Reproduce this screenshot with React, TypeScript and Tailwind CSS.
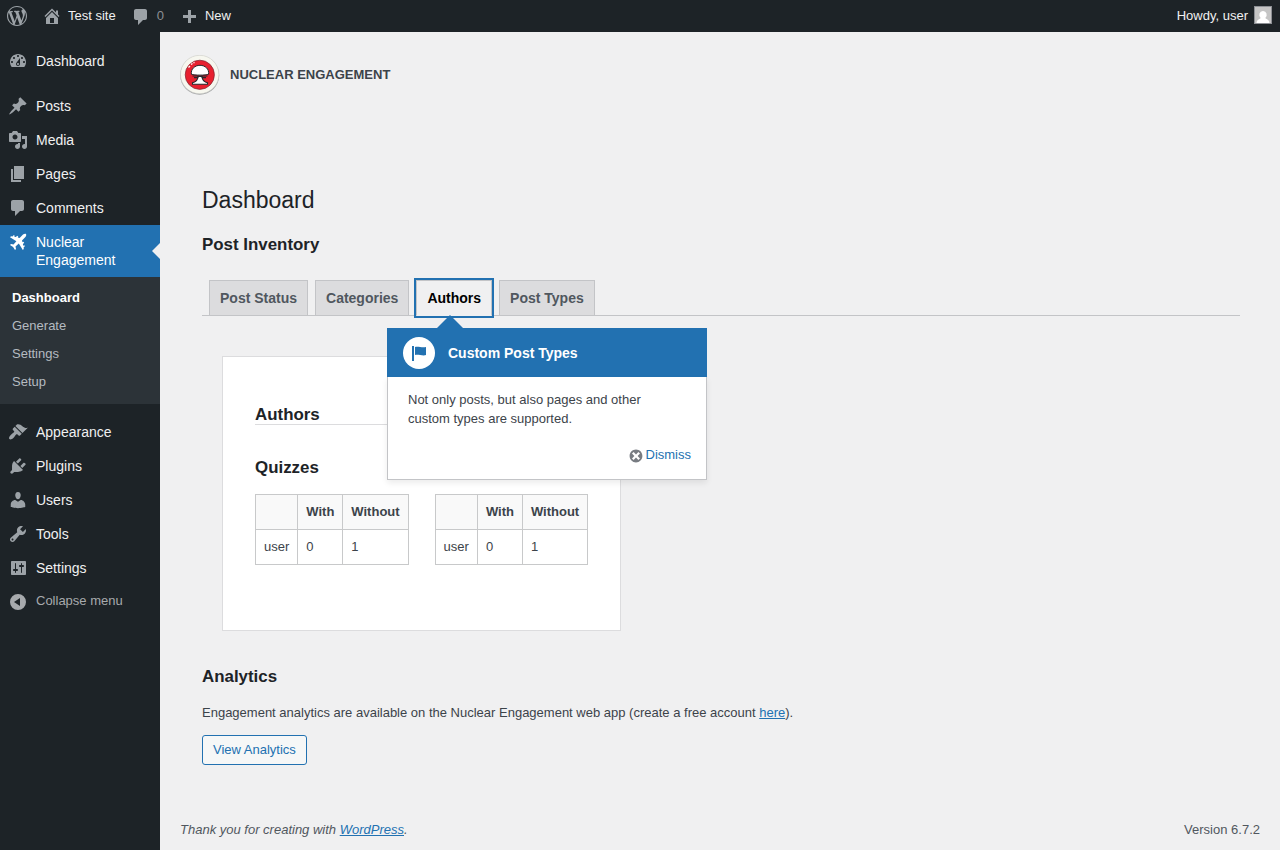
import React from 'react';

const ICONS: Record<string, string> = {
  wordpress:
    'M20 10c0-5.51-4.49-10-10-10C4.48 0 0 4.49 0 10c0 5.52 4.48 10 10 10 5.51 0 10-4.48 10-10zM7.78 15.37L4.37 6.22c.55-.02 1.17-.08 1.17-.08.5-.06.44-1.13-.06-1.11 0 0-1.45.11-2.37.11-.18 0-.37 0-.58-.01C4.12 2.69 6.87 1.11 10 1.11c2.33 0 4.45.87 6.05 2.34-.68-.11-1.65.39-1.65 1.58 0 .74.45 1.36.9 2.1.35.61.55 1.36.55 2.46 0 1.49-1.4 5-1.4 5l-3.03-8.37c.54-.02.82-.17.82-.17.5-.05.44-1.25-.06-1.22 0 0-1.44.12-2.38.12-.87 0-2.33-.12-2.33-.12-.5-.03-.56 1.2-.06 1.22l.92.08 1.26 3.41zM17.41 10c.24-.64.74-1.87.43-4.25.7 1.29 1.05 2.71 1.05 4.25 0 3.29-1.73 6.24-4.4 7.78.97-2.59 1.94-5.2 2.92-7.78zM6.1 18.09C3.12 16.65 1.11 13.53 1.11 10c0-1.3.23-2.48.72-3.59C3.25 10.3 4.67 14.2 6.1 18.09zm4.03-6.63l2.58 6.98c-.86.29-1.76.45-2.71.45-.79 0-1.57-.11-2.29-.33.81-2.38 1.62-4.74 2.42-7.1z',
  home: 'M16 8.5l1.53 1.53-1.06 1.06L10 4.6l-6.47 6.49-1.06-1.06L10 2.5l4 4v-2h2v4zm-6-2.46l6 5.99V18H4v-5.97zM12 17v-5H8v5h4z',
  comments: 'M5 2h9c1.1 0 2 .9 2 2v7c0 1.1-.9 2-2 2h-2l-5 5v-5H5c-1.1 0-2-.9-2-2V4c0-1.1.9-2 2-2z',
  plus: 'M17 7v3h-5v5H9v-5H4V7h5V2h3v5h5z',
  dashboard:
    'M3.76 16h12.48c1.1-1.37 1.76-3.11 1.76-5 0-4.42-3.58-8-8-8s-8 3.58-8 8c0 1.89.66 3.63 1.76 5zM10 4c.55 0 1 .45 1 1s-.45 1-1 1-1-.45-1-1 .45-1 1-1zM6 6c.55 0 1 .45 1 1s-.45 1-1 1-1-.45-1-1 .45-1 1-1zm8 0c.55 0 1 .45 1 1s-.45 1-1 1-1-.45-1-1 .45-1 1-1zm-5.37 5.55L12 7v6c0 1.1-.9 2-2 2s-2-.9-2-2c0-.57.24-1.08.63-1.45zM4 10c.55 0 1 .45 1 1s-.45 1-1 1-1-.45-1-1 .45-1 1-1zm12 0c.55 0 1 .45 1 1s-.45 1-1 1-1-.45-1-1 .45-1 1-1zm-5 3c0-.55-.45-1-1-1s-1 .45-1 1 .45 1 1 1 1-.45 1-1z',
  post: 'M10.44 3.02l1.82-1.82 6.36 6.35-1.83 1.82c-1.05-.68-2.48-.57-3.41.36l-.75.75c-.92.93-1.04 2.35-.35 3.41l-1.83 1.82-2.41-2.41-2.8 2.79c-.42.42-3.38 2.71-3.8 2.29s1.86-3.39 2.28-3.81l2.79-2.79L4.1 9.36l1.83-1.82c1.05.69 2.48.57 3.4-.36l.75-.75c.93-.92 1.05-2.35.36-3.41z',
  media:
    'M13 11V4c0-.55-.45-1-1-1h-1.67L9 1H5L3.67 3H2c-.55 0-1 .45-1 1v7c0 .55.45 1 1 1h10c.55 0 1-.45 1-1zM7 4.5c1.38 0 2.5 1.12 2.5 2.5S8.38 9.5 7 9.5 4.5 8.38 4.5 7 5.62 4.5 7 4.5zM14 6h5v10.5c0 1.38-1.12 2.5-2.5 2.5S14 17.88 14 16.5s1.12-2.5 2.5-2.5c.17 0 .34.02.5.05V9h-3V6zm-4 8.05V13h2v3.5c0 1.38-1.12 2.5-2.5 2.5S7 17.88 7 16.5 8.12 14 9.5 14c.17 0 .34.02.5.05z',
  page: 'M6 15V2h10v13H6zm-1 1h8v2H3V5h2v11z',
  airplane:
    'M18 2c.5.7.2 2.1-.6 3L14 8.4l.5 1.9.7-.6 1 .9-1.3 1.7.3 1.5.9-.6.9.9-1.4 1.5.2 1.4-1 1L10.8 11.6 7.5 14.5 8 17l-1 1-1.9-3L2 13l1-1 2.5.5L8.4 9.2 2 5.2l1-1 1.4.2 1.5-1.4.9.9-.6.9 1.5.3 1.7-1.3.9 1-.6.7 1.9.5L15 2.6c.9-.8 2.3-1.1 3-.6z',
  appearance:
    'M14.48 11.06L7.41 3.99l1.5-1.5c.5-.56 2.3-.47 3.51.32 1.21.8 1.43 1.28 2.91 2.1 1.18.64 2.45 1.26 4.45.85zm-.71.71L6.7 4.7 4.93 6.47c-.39.39-.39 1.02 0 1.41l1.06 1.06c.39.39.39 1.03 0 1.42-.6.6-1.43 1.11-2.21 1.69-.35.26-.7.53-1.01.84C1.43 14.23.4 16.08 1.4 17.07c.99 1 2.84-.03 4.18-1.36.31-.31.58-.66.85-1.02.57-.78 1.08-1.61 1.69-2.21.39-.39 1.02-.39 1.41 0l1.06 1.06c.39.39 1.02.39 1.41 0z',
  plugins:
    'M13.11 4.36L9.87 7.6 8 5.73l3.24-3.24c.35-.34 1.05-.2 1.56.32.52.51.66 1.21.31 1.55zm-8 1.77l.91-1.12 9.01 9.01-1.19.84c-.71.71-2.63 1.16-3.82 1.16H6.14L4.9 17.26c-.59.59-1.54.59-2.12 0-.59-.58-.59-1.53 0-2.12l1.24-1.24v-3.88c0-1.13.4-3.19 1.09-3.89zm7.26 3.97l3.24-3.24c.34-.35 1.04-.21 1.55.31.52.51.66 1.21.31 1.55l-3.24 3.25z',
  users:
    'M10 9.25c-2.27 0-2.73-3.44-2.73-3.44C7 4.02 7.82 2 9.97 2c2.16 0 2.98 2.02 2.71 3.81 0 0-.41 3.44-2.68 3.44zm0 2.57L12.72 10c2.39 0 4.52 2.33 4.52 4.53v2.49s-3.65 1.13-7.24 1.13c-3.65 0-7.24-1.13-7.24-1.13v-2.49c0-2.25 1.94-4.48 4.47-4.48z',
  tools:
    'M16.68 9.77c-1.34 1.34-3.3 1.67-4.95.99l-5.41 6.52c-.99.99-2.59.99-3.58 0s-.99-2.59 0-3.57l6.52-5.42c-.68-1.65-.35-3.61.99-4.95 1.28-1.28 3.12-1.62 4.72-1.06l-2.89 2.89 2.82 2.82 2.86-2.87c.53 1.58.18 3.39-1.08 4.65zM3.81 16.21c.4.39 1.04.39 1.43 0 .4-.4.4-1.04 0-1.43-.39-.4-1.03-.4-1.43 0-.39.39-.39 1.03 0 1.43z',
  settings:
    'M18 16V4c0-.55-.45-1-1-1H4c-.55 0-1 .45-1 1v12c0 .55.45 1 1 1h13c.55 0 1-.45 1-1zM8 11h1c.55 0 1 .45 1 1s-.45 1-1 1H8v1.5c0 .28-.22.5-.5.5s-.5-.22-.5-.5V13H6c-.55 0-1-.45-1-1s.45-1 1-1h1V5.5c0-.28.22-.5.5-.5s.5.22.5.5V11zm5-2h-1c-.55 0-1-.45-1-1s.45-1 1-1h1V5.5c0-.28.22-.5.5-.5s.5.22.5.5V7h1c.55 0 1 .45 1 1s-.45 1-1 1h-1v5.5c0 .28-.22.5-.5.5s-.5-.22-.5-.5V9z',
  collapse: 'M10 2a8 8 0 1 0 0 16 8 8 0 0 0 0-16zm2 4.1v7.8L6 10z',
  flag: 'M5 18V3H3v15h2zm1-6V4c3-1 7 1 11 0v8c-3 1.27-8-1-11 0z',
  dismiss:
    'M10 2c4.42 0 8 3.58 8 8s-3.58 8-8 8-8-3.58-8-8 3.58-8 8-8zm5 11l-3-3 3-3-2-2-3 3-3-3-2 2 3 3-3 3 2 2 3-3 3 3z',
};

const Icon = ({ name, className = 'size-5 text-[#9ca2a7]' }: { name: string; className?: string }) => (
  <svg viewBox="0 0 20 20" fill="currentColor" fillRule="evenodd" className={`shrink-0 ${className}`}>
    <path d={ICONS[name]} />
  </svg>
);

const AdminBar = () => (
  <header className="flex h-8 items-start justify-between bg-[#1d2327] pr-2 text-[13px] leading-8 text-[#f0f0f1]">
    <div className="flex">
      <Icon name="wordpress" className="mt-1.5 ml-[7px] size-5 text-[#9ca2a7]" />
      <Icon name="home" className="mt-1.5 mr-1.5 ml-[15px] size-5 text-[#9ca2a7]" />
      <span>Test site</span>
      <Icon name="comments" className="mt-[7px] mr-1.5 ml-[15px] size-5 text-[#9ca2a7]" />
      <span className="text-[#8c8f94]">0</span>
      <Icon name="plus" className="mt-2 mr-1.5 ml-[15px] size-5 text-[#9ca2a7]" />
      <span>New</span>
    </div>
    <div className="flex">
      <span>Howdy, user</span>
      <svg viewBox="0 0 18 18" className="mt-1.5 ml-1.5 size-[18px]">
        <path d="M0 0h18v18H0z" fill="#8c8f94" />
        <path d="M1 1h16v16H1z" fill="#c5c5c5" />
        <path d="M9 5a3.6 3.9 0 0 1 2.3 7c.3 1 4 1 4.2 5h-13c.2-4 3.9-4 4.2-5A3.6 3.9 0 0 1 9 5z" fill="#fff" />
      </svg>
    </div>
  </header>
);

const MenuItem = ({ icon, label }: { icon: string; label: string }) => (
  <li className="flex h-[34px] pt-[7px] pl-2">
    <Icon name={icon} />
    <span className="mt-px ml-2 text-sm leading-[18px] text-[#f0f0f1]">{label}</span>
  </li>
);

const contentItems = [
  { icon: 'post', label: 'Posts' },
  { icon: 'media', label: 'Media' },
  { icon: 'page', label: 'Pages' },
  { icon: 'comments', label: 'Comments' },
];

const adminItems = [
  { icon: 'appearance', label: 'Appearance' },
  { icon: 'plugins', label: 'Plugins' },
  { icon: 'users', label: 'Users' },
  { icon: 'tools', label: 'Tools' },
  { icon: 'settings', label: 'Settings' },
];

const Sidebar = () => (
  <nav className="w-40 shrink-0 bg-[#1d2327] pt-3">
    <ul>
      <MenuItem icon="dashboard" label="Dashboard" />
    </ul>
    <ul className="mt-[11px]">
      {contentItems.map((item) => (
        <MenuItem key={item.label} {...item} />
      ))}
    </ul>
    <div className="relative flex h-[52px] bg-[#2271b1] pt-[7px] pl-2 text-white">
      <Icon name="airplane" className="size-5 text-white" />
      <span className="mt-px ml-2 text-sm leading-[18px]">
        Nuclear
        <br />
        Engagement
      </span>
      <span className="absolute top-[18px] right-0 border-8 border-l-0 border-transparent border-r-[#f0f0f1]" />
    </div>
    <ul className="bg-[#2c3338] pt-[7px] pb-2 pl-3 text-[13px] leading-7 text-[#b5bbc1]">
      <li className="font-semibold text-white">Dashboard</li>
      <li>Generate</li>
      <li>Settings</li>
      <li>Setup</li>
    </ul>
    <ul className="mt-[11px]">
      {adminItems.map((item) => (
        <MenuItem key={item.label} {...item} />
      ))}
    </ul>
    <div className="flex pt-[7px] pl-2 text-[13px] leading-[18px] text-[#a7aaad]">
      <Icon name="collapse" className="size-5 text-[#a7aaad]" />
      <span className="ml-2">Collapse menu</span>
    </div>
  </nav>
);

const Logo = () => (
  <svg viewBox="0 0 40 40" className="size-10">
    <circle cx="19.7" cy="20.3" r="19.5" fill="#a3a5a7" />
    <circle cx="19.7" cy="19.5" r="19.2" fill="#f7f7ef" stroke="#cfcfca" strokeWidth="0.6" />
    <circle cx="19.8" cy="19.8" r="14.6" fill="#e8212f" stroke="#7a2530" strokeWidth="0.7" />
    <path d="M17.8 21.5h4.4c0 3.5 1.3 5.3 5.3 6.3v1.4h-15v-1.4c4-1 5.3-2.8 5.3-6.3z" fill="#fff" stroke="#24282c" strokeWidth="1.1" />
    <path d="M12.5 21h15M14 22.600h12" stroke="#24282c" strokeWidth="1.1" />
    <path d="M11.4 19.3c-.8-5.3 3.5-9 8.6-9s9.4 3.7 8.6 9c-3 1.1-14.2 1.1-17.2 0z" fill="#fff" stroke="#24282c" strokeWidth="1" />
    <path d="M18.6 22h2.8v4h-2.8z" fill="#fff" />
    <path d="M8.5 12.5l1.5-1.5M11 9.5l1.5-1M13.5 7.8l1-.5" stroke="#fff" strokeWidth="1.3" />
  </svg>
);

const TAB = 'border border-b-0 border-[#c3c4c7] bg-[#dcdcde] px-2.5 py-[5px] text-[#50575e]';

const Tabs = () => (
  <div className="mt-5 flex gap-[7px] border-b border-[#c3c4c7] pl-[7px] text-sm leading-6 font-semibold">
    <a className={TAB}>Post Status</a>
    <a className={TAB}>Categories</a>
    <a className="-mb-px border border-[#c3c4c7] border-b-[#f0f0f1] bg-[#f0f0f1] px-2.5 py-[5px] text-black ring-2 ring-[#2271b1]">
      Authors
    </a>
    <a className={TAB}>Post Types</a>
  </div>
);

const CountTable = () => (
  <table className="border-collapse text-left">
    <thead>
      <tr className="bg-[#f9f9f9]">
        {['', 'With', 'Without'].map((h) => (
          <th key={h} className="h-[35px] border border-[#c8c9ca] px-2 font-semibold">{h}</th>
        ))}
      </tr>
    </thead>
    <tbody>
      <tr>
        {['user', '0', '1'].map((v) => (
          <td key={v} className="h-[35px] border border-[#c8c9ca] px-2">{v}</td>
        ))}
      </tr>
    </tbody>
  </table>
);

const Pointer = () => (
  <div className="absolute top-[-29px] left-[164px] w-80">
    <span className="absolute -top-[13px] left-[50px] border-[13px] border-t-0 border-transparent border-b-[#2271b1]" />
    <div className="flex h-[49px] items-center gap-[13px] bg-[#2271b1] pl-4 text-sm font-semibold text-white">
      <span className="flex size-8 items-center justify-center rounded-full bg-white">
        <Icon name="flag" className="size-5 text-[#2271b1]" />
      </span>
      Custom Post Types
    </div>
    <div className="h-[103px] border border-t-0 border-[#c3c4c7] bg-white px-[15px] pt-[13px] shadow-[0_3px_6px_rgba(0,0,0,0.08)]">
      <p className="px-[5px] leading-[19px]">
        Not only posts, but also pages and other
        <br />
        custom types are supported.
      </p>
      <div className="mt-[17px] flex items-center justify-end gap-0.5 leading-5 text-[#2271b1]">
        <Icon name="dismiss" className="mt-px size-4 text-[#787c82]" />
        Dismiss
      </div>
    </div>
  </div>
);

export default function App() {
  return (
    <div className="flex h-[850px] flex-col bg-[#f0f0f1] font-['Liberation_Sans',sans-serif] text-[13px] text-[#3c434a]">
      <AdminBar />
      <div className="flex flex-1">
        <Sidebar />
        <main className="flex flex-1 flex-col px-5">
          <div className="mt-[23px] flex h-10 items-center gap-2.5 font-semibold">
            <Logo />
            NUCLEAR ENGAGEMENT
          </div>
          <div className="pt-[90px] pr-5 pl-[22px]">
            <h1 className="text-[23px] leading-[30px] text-[#1d2327]">Dashboard</h1>
            <h2 className="mt-[18px] pb-[3px] text-[16.9px] leading-6 font-semibold text-[#1d2327]">Post Inventory</h2>
            <Tabs />
            <section className="relative mt-10 ml-5 h-[275px] w-[399px] border border-[#dcdcde] bg-white px-8 pt-12">
              <h2 className="border-b border-[#dcdcde] text-[16.9px] leading-[19px] font-semibold text-[#1d2327]">Authors</h2>
              <h2 className="mt-8 text-[16.9px] leading-[22px] font-semibold text-[#1d2327]">Quizzes</h2>
              <div className="mt-[15px] grid grid-cols-[179.6px_auto] justify-start justify-items-start">
                <CountTable />
                <CountTable />
              </div>
              <Pointer />
            </section>
            <h2 className="mt-[34px] text-[16.9px] leading-6 font-semibold text-[#1d2327]">Analytics</h2>
            <p className="mt-3.5 leading-5">
              Engagement analytics are available on the Nuclear Engagement web app (create a free account{' '}
              <a className="text-[#2271b1] underline">here</a>).
            </p>
            <button className="mt-3 h-[30px] rounded-[3px] border border-[#2271b1] bg-[#f6f7f7] px-2.5 text-[#2271b1]">
              View Analytics
            </button>
          </div>
          <footer className="mt-auto flex justify-between pb-2.5 leading-5 text-[#50575e]">
            <span className="italic">
              Thank you for creating with <a className="text-[#2271b1] underline">WordPress</a>.
            </span>
            <span>Version 6.7.2</span>
          </footer>
        </main>
      </div>
    </div>
  );
}
